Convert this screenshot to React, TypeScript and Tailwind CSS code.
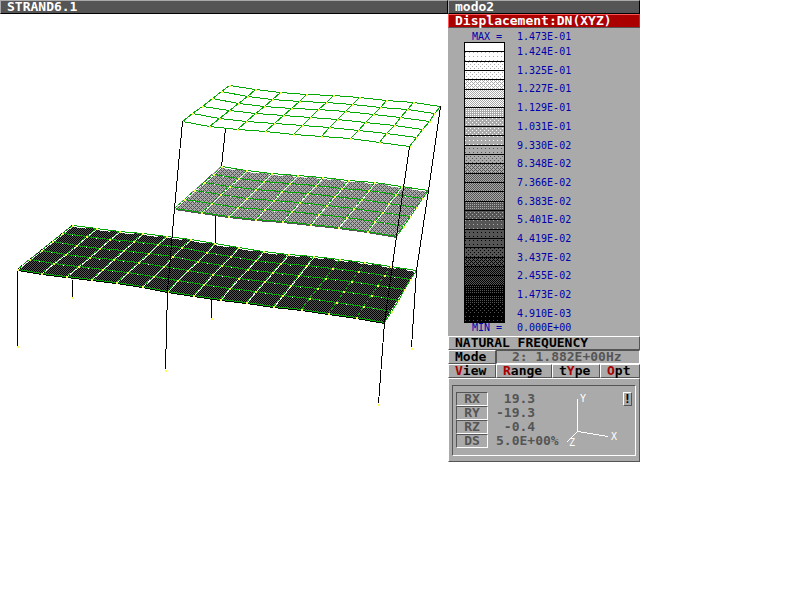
type Point = [number, number];
type Fill = 'none' | 'mid' | 'dark';

interface Deck {
  back: Point[];
  front: Point[];
  fill: Fill;
}

const decks: Deck[] = [
  {
    fill: 'dark',
    back: [
      [73, 225], [97, 228], [120, 231], [143, 233], [167, 236], [191, 239], [215, 243], [239, 247],
      [264, 251], [289, 254], [314, 256], [340, 259], [365, 262], [391, 266], [417, 270],
    ],
    front: [
      [18, 269], [42, 273], [67, 276], [92, 279], [117, 282], [143, 286], [168, 291], [194, 295],
      [221, 299], [247, 302], [274, 306], [302, 309], [329, 313], [357, 317], [385, 322],
    ],
  },
  {
    fill: 'mid',
    back: [
      [222, 166], [247, 170], [272, 173], [298, 175], [323, 177], [349, 180], [375, 182], [402, 186],
      [429, 190],
    ],
    front: [
      [175, 208], [202, 212], [229, 216], [256, 219], [283, 221], [311, 224], [339, 227], [368, 231],
      [397, 236],
    ],
  },
  {
    fill: 'none',
    back: [
      [230, 85], [256, 89], [281, 92], [307, 94], [334, 95], [360, 97], [387, 100], [414, 102],
      [441, 106],
    ],
    front: [
      [183, 121], [210, 126], [238, 129], [266, 131], [294, 134], [322, 136], [351, 138], [380, 142],
      [410, 146],
    ],
  },
];

const hiddenColumns = [
  '73,279 73,296',
  '226,128 222,166',
  '216,215 216,243',
  '212,298 212,317',
];

const frontColumns = [
  '18,270 18,345',
  '183,121 175,208 168,291 166,369',
  '441,106 429,190 417,270 412,347',
  '410,146 397,236 385,322 379,403',
];

const supports: Point[] = [
  [18, 346], [73, 297], [166, 370], [212, 318], [412, 348], [379, 404],
];

const rowSteps = [0, 0.18, 0.37, 0.57, 0.78, 1];

const WHITE = '#ffffff';
const LIGHT = '#aaaaaa';
const DARK = '#555555';
const BLACK = '#000000';

// pixels lit inside a 4x4 tile
const dots: Record<string, Point[]> = {
  solid: [],
  sparse: [[1, 2]],
  stagger: [[0, 0], [2, 2]],
  grid: [[0, 0], [2, 0], [0, 2], [2, 2]],
  dense: [[0, 0], [2, 0], [1, 1], [0, 2], [2, 2], [3, 3]],
  check: [[0, 0], [2, 0], [1, 1], [3, 1], [0, 2], [2, 2], [1, 3], [3, 3]],
};

const bands: [string, string, string][] = [
  [WHITE, LIGHT, 'solid'],
  [WHITE, LIGHT, 'sparse'],
  [WHITE, LIGHT, 'stagger'],
  [WHITE, LIGHT, 'stagger'],
  [WHITE, LIGHT, 'dense'],
  [WHITE, LIGHT, 'check'],
  [WHITE, LIGHT, 'check'],
  [LIGHT, WHITE, 'grid'],
  [LIGHT, WHITE, 'stagger'],
  [LIGHT, WHITE, 'stagger'],
  [LIGHT, WHITE, 'sparse'],
  [LIGHT, DARK, 'sparse'],
  [LIGHT, DARK, 'stagger'],
  [LIGHT, DARK, 'dense'],
  [LIGHT, DARK, 'check'],
  [LIGHT, DARK, 'check'],
  [LIGHT, DARK, 'check'],
  [DARK, LIGHT, 'grid'],
  [DARK, LIGHT, 'stagger'],
  [DARK, LIGHT, 'sparse'],
  [DARK, BLACK, 'sparse'],
  [DARK, BLACK, 'sparse'],
  [DARK, BLACK, 'stagger'],
  [DARK, BLACK, 'dense'],
  [DARK, BLACK, 'check'],
  [DARK, BLACK, 'check'],
  [BLACK, DARK, 'grid'],
  [BLACK, DARK, 'grid'],
  [BLACK, DARK, 'stagger'],
  [BLACK, DARK, 'sparse'],
];

const levels = [
  '1.424E-01', '1.325E-01', '1.227E-01', '1.129E-01', '1.031E-01', '9.330E-02', '8.348E-02',
  '7.366E-02', '6.383E-02', '5.401E-02', '4.419E-02', '3.437E-02', '2.455E-02', '1.473E-02',
  '4.910E-03',
];

const tabs = [
  { before: '', hot: 'V', after: 'iew', width: 'w-12' },
  { before: '', hot: 'R', after: 'ange', width: 'w-14' },
  { before: 't', hot: 'Y', after: 'pe', width: 'w-12' },
  { before: '', hot: 'O', after: 'pt', width: 'flex-1' },
];

const rotations = [
  { name: 'RX', value: ' 19.3' },
  { name: 'RY', value: '-19.3' },
  { name: 'RZ', value: ' -0.4' },
  { name: 'DS', value: '5.0E+00%' },
];

const raised = 'border border-t-white border-l-white border-r-[#555555] border-b-[#555555]';
const sunken = 'border border-t-[#555555] border-l-[#555555] border-r-white border-b-white';
const titleFont = "font-['DejaVu_Sans_Mono',monospace] text-[13px] leading-3 font-bold";
const smallFont = "font-['DejaVu_Sans_Mono',monospace] text-[10px] leading-[10px]";

function Dither({ id, base, ink, kind }: { id: string; base: string; ink: string; kind: string }) {
  return (
    <pattern id={id} width="4" height="4" patternUnits="userSpaceOnUse">
      <rect width="4" height="4" fill={base} />
      {dots[kind].map(([x, y]) => (
        <rect key={`${x}-${y}`} x={x} y={y} width="1" height="1" fill={ink} />
      ))}
    </pattern>
  );
}

function toPath(points: Point[]) {
  return points.map(([x, y]) => `${x},${y}`).join(' ');
}

function DeckMesh({ back, front, fill }: Deck) {
  const rows = rowSteps.map((t) =>
    back.map(([x, y], i): Point => [
      Math.round(x + (front[i][0] - x) * t),
      Math.round(y + (front[i][1] - y) * t),
    ]),
  );
  const last = rows.length - 1;

  return (
    <g>
      {fill !== 'none' && (
        <>
          <polygon
            points={toPath([...back, ...[...front].reverse()])}
            fill={fill === 'dark' ? 'url(#deck-dark)' : 'url(#deck-mid)'}
          />
          <g transform="translate(0.5 1.5)" fill="none">
            <polyline points={toPath(back)} stroke={WHITE} strokeDasharray="14 10" />
            <polyline points={toPath(front)} stroke={fill === 'dark' ? BLACK : DARK} />
          </g>
          <g transform="translate(1.5 0.5)" fill="none" stroke={WHITE}>
            {back.slice(0, fill === 'dark' ? 11 : 8).map((_, i) => (
              <polyline key={i} points={toPath(rows.map((row) => row[i]))} />
            ))}
          </g>
        </>
      )}
      <g transform="translate(0.5 0.5)" fill="none" stroke="#00aa00">
        {rows.map((row, i) => (
          <polyline key={i} points={toPath(row)} />
        ))}
        {back.map((_, i) => (
          <polyline
            key={i}
            points={toPath(rows.map((row) => row[i]))}
            strokeDasharray={fill === 'none' || i === back.length - 1 ? undefined : '3 2'}
          />
        ))}
      </g>
      {rows.map((row, r) =>
        row.map(([x, y], i) => (
          <g key={`${r}-${i}`}>
            <rect x={x} y={y} width="2" height="2" fill="#ffff55" />
            {fill !== 'none' && r > 0 && r < last && i < row.length - 1 && (
              <rect x={x + 10} y={y + 2} width="1" height="1" fill={WHITE} />
            )}
          </g>
        )),
      )}
    </g>
  );
}

function ModelView() {
  return (
    <svg viewBox="1 14 448 448" className="block w-full" shapeRendering="crispEdges" role="img" aria-label="Deformed frame">
      <defs>
        <Dither id="deck-dark" base={BLACK} ink={DARK} kind="check" />
        <Dither id="deck-mid" base={LIGHT} ink={DARK} kind="dense" />
      </defs>
      <g transform="translate(0.5 0.5)" fill="none" stroke={BLACK}>
        {hiddenColumns.map((points) => (
          <polyline key={points} points={points} />
        ))}
      </g>
      {decks.map((deck) => (
        <DeckMesh key={deck.fill} {...deck} />
      ))}
      <g transform="translate(0.5 0.5)" fill="none" stroke={BLACK}>
        {frontColumns.map((points) => (
          <polyline key={points} points={points} />
        ))}
      </g>
      {supports.map(([x, y]) => (
        <rect key={x} x={x} y={y} width="2" height="2" fill="#ffff55" />
      ))}
    </svg>
  );
}

function ColourScale() {
  const edge = (i: number) => Math.round((i * 280) / bands.length);
  return (
    <svg width="41" height="281" viewBox="0 0 41 281" shapeRendering="crispEdges" aria-hidden="true">
      <defs>
        {bands.map(([base, ink, kind], i) => (
          <Dither key={i} id={`band-${i}`} base={base} ink={ink} kind={kind} />
        ))}
      </defs>
      <rect width="41" height="281" fill={BLACK} />
      {bands.map((_, i) => (
        <rect
          key={i}
          x="1"
          y={edge(i) + 1}
          width="39"
          height={edge(i + 1) - edge(i) - 1}
          fill={`url(#band-${i})`}
        />
      ))}
    </svg>
  );
}

function Legend() {
  return (
    <section className={`flex h-[308px] flex-col pt-1 text-[#0000aa] ${smallFont}`}>
      <div className="flex">
        <span className="w-[69px] pl-6 whitespace-pre">MAX =</span>
        <span>1.473E-01</span>
      </div>
      <div className="flex gap-3">
        <div className="pl-4">
          <ColourScale />
        </div>
        <ul className="flex h-[277px] flex-col justify-between pt-[5px]">
          {levels.map((level) => (
            <li key={level}>{level}</li>
          ))}
        </ul>
      </div>
      <div className="flex">
        <span className="w-[69px] pl-6 whitespace-pre">MIN =</span>
        <span>0.000E+00</span>
      </div>
    </section>
  );
}

function Axes() {
  return (
    <svg width="56" height="56" viewBox="564 392 56 56" shapeRendering="crispEdges" aria-label="Axes">
      <g fill="none" stroke={WHITE} transform="translate(0.5 0.5)">
        <polyline points="577,398 577,431 608,436" />
        <polyline points="577,431 566,442" />
      </g>
      <g fill={WHITE} className={smallFont}>
        <text x="580" y="402">Y</text>
        <text x="611" y="440">X</text>
        <text x="569" y="446">Z</text>
      </g>
    </svg>
  );
}

export default function App() {
  return (
    <div className="min-h-screen bg-white">
      <div className="flex w-full max-w-[640px] items-start">
        <main className="min-w-0 flex-1">
          <h1
            className={`h-[14px] border border-t-[#aaaaaa] border-r-black border-b-black border-l-[#aaaaaa] bg-[#555555] pl-[6px] text-white ${titleFont}`}
          >
            STRAND6.1
          </h1>
          <ModelView />
        </main>

        <aside className="w-48 shrink-0 bg-[#aaaaaa]">
          <h2
            className={`h-[14px] border border-t-[#aaaaaa] border-r-black border-b-black border-l-[#aaaaaa] bg-[#555555] pl-[6px] text-white ${titleFont}`}
          >
            modo2
          </h2>
          <h3
            className={`h-[14px] border border-t-[#ff5555] border-r-[#555555] border-b-[#555555] border-l-[#ff5555] bg-[#aa0000] pl-[6px] text-white ${titleFont}`}
          >
            Displacement:DN(XYZ)
          </h3>

          <Legend />

          <div className={`h-[14px] pl-[6px] text-black ${raised} ${titleFont}`}>
            NATURAL FREQUENCY
          </div>
          <div className="flex">
            <div className={`h-[14px] w-12 pl-[6px] text-black ${raised} ${titleFont}`}>Mode</div>
            <div className={`h-[14px] flex-1 pl-[15px] whitespace-pre text-[#555555] ${sunken} ${titleFont}`}>
              2: 1.882E+00Hz
            </div>
          </div>
          <nav className="flex">
            {tabs.map((tab) => (
              <button
                key={tab.hot}
                type="button"
                className={`h-[14px] pl-[6px] text-left text-black ${tab.width} ${raised} ${titleFont}`}
              >
                {tab.before}
                <span className="text-[#aa0000]">{tab.hot}</span>
                {tab.after}
              </button>
            ))}
          </nav>

          <section className={`h-[84px] px-[3px] pt-[6px] pb-[5px] ${raised}`}>
            <div className={`flex h-full items-start pt-[6px] pr-[3px] pl-[3px] ${sunken}`}>
              <table className={`border-separate border-spacing-0 text-[#555555] ${titleFont}`}>
                <tbody>
                  {rotations.map((row) => (
                    <tr key={row.name}>
                      <th scope="row" className={`h-[14px] w-8 p-0 text-center ${sunken}`}>
                        {row.name}
                      </th>
                      <td className="h-[14px] w-[76px] max-w-[76px] p-0 pl-2 whitespace-pre">{row.value}</td>
                    </tr>
                  ))}
                </tbody>
              </table>
              <Axes />
              <button
                type="button"
                aria-label="Information"
                className={`ml-auto h-[14px] w-[9px] text-black ${raised} ${titleFont}`}
              >
                <span className="flex justify-center">!</span>
              </button>
            </div>
          </section>
        </aside>
      </div>
    </div>
  );
}
